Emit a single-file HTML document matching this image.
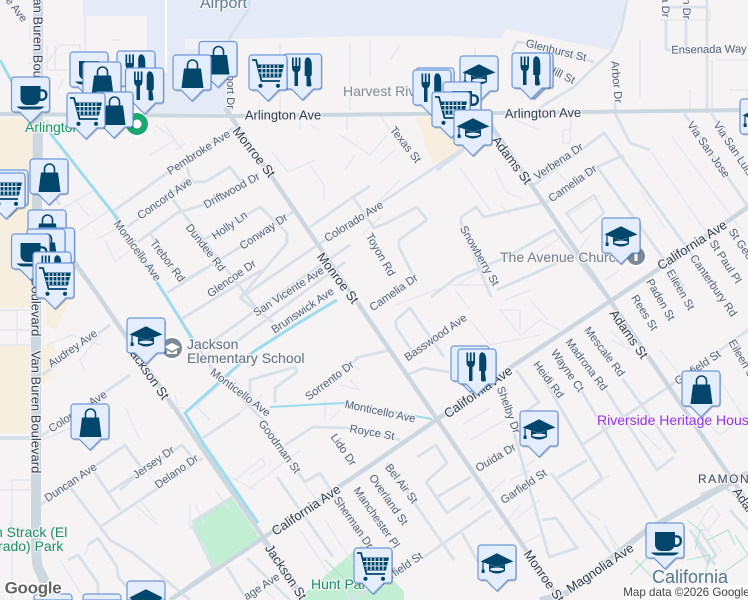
<!DOCTYPE html>
<html lang="en"><head><meta charset="utf-8"><title>Map</title>
<style>
html,body{margin:0;padding:0;width:748px;height:600px;overflow:hidden;background:#f5f3f4}
svg{display:block;font-family:"Liberation Sans",Arial,sans-serif;overflow:hidden}
.a{fill:none;stroke:#cdd7df;stroke-width:4.5;stroke-linejoin:round}
.b{fill:none;stroke:#d8e0e8;stroke-width:2.8;stroke-linejoin:round}
.c{fill:none;stroke:#e3e7ec;stroke-width:1.4;stroke-linejoin:round}
.w{fill:none;stroke:#9ddcee;stroke-width:3;stroke-linejoin:round}
text{text-anchor:middle;dominant-baseline:central;paint-order:stroke;stroke:#f5f3f4;stroke-width:2.5px;stroke-linejoin:round}
.s text,text.s{font-size:11.2px;fill:#4f6277}
.m text{font-size:13px;fill:#2f3f4f}
.p{text-anchor:start;font-size:14px;fill:#6c7a88;dominant-baseline:auto}
</style></head><body>
<svg width="748" height="600" viewBox="0 0 748 600" xmlns="http://www.w3.org/2000/svg">
<defs>
<path id="box" d="M3 0H35a3 3 0 0 1 3 3V32a3 3 0 0 1-3 3H30L19 46L8 35H3a3 3 0 0 1-3-3V3a3 3 0 0 1 3-3Z"/>
<g id="base">
<use href="#box" x="1" y="1.5" fill="#000" fill-opacity=".22"/>
<use href="#box" fill="#e3edfc" stroke="#6e97d8" stroke-width="1.2"/>
</g>
<g id="coffee"><use href="#base"/><g fill="#03466b">
<path d="M9 9H29V12.2H31A5 5 0 0 1 36 17V18A6 6 0 0 1 30 24H28A7 7 0 0 1 22 28H15A6.5 6.5 0 0 1 9 21.5ZM29 14.5V21.5H30A3 3 0 0 0 33.5 18V17A3 3 0 0 0 31 14.5Z" fill-rule="evenodd"/>
<path d="M5 29.5H33Q30 32.5 26 32.5H12Q8 32.5 5 29.5Z"/></g></g>
<g id="fork"><use href="#base"/><g fill="#03466b">
<path d="M8.5 3.500H10.200V12H11.800V3.500H13.600V12H15.200V3.500H17V13Q17 17 14.500 18V32H11V18Q8.500 17 8.500 13Z"/>
<path d="M24.500 3.200Q28.300 4 28.300 12V20Q28.300 22 26.800 22.500L28 31Q28 32.500 26 32.500H24.500Q23 32.500 23 31V22H21.200V8Q21.500 3.200 24.500 3.200Z"/></g></g>
<g id="bag"><use href="#base"/><g>
<path d="M11 13.500H28L30.500 33H8.500Z" fill="#03466b"/>
<path d="M14.500 16V10A5 5 0 0 1 24.500 10V16" fill="none" stroke="#03466b" stroke-width="1.600"/></g></g>
<g id="cart"><use href="#base"/><g>
<path d="M3 5H7L12.500 26H31" fill="none" stroke="#03466b" stroke-width="1.800"/>
<path d="M8.500 9.500H35L32 22.500H12Z" fill="#03466b"/>
<path d="M13 10V22M17 10V22M21 10V22M25 10V22M29 10V22M9 13.500H34.500M10 18H33.500" stroke="#e3edfc" stroke-width="1.100" fill="none"/>
<circle cx="11.500" cy="30.800" r="2.100" fill="#03466b"/><circle cx="29" cy="30.800" r="2.100" fill="#03466b"/></g></g>
<g id="grad"><use href="#base"/><g>
<path d="M19 8.300L35.500 16.500L19 22L2.500 16.500Z" fill="#03466b"/>
<path d="M11 19.500L19 22.300L27 19.500V26Q19 31 11 26Z" fill="#03466b"/>
<ellipse cx="19" cy="24.300" rx="7" ry="1.700" fill="#e3edfc"/>
<path d="M5 17V25" stroke="#03466b" stroke-width="1.200"/><rect x="3.600" y="24.500" width="3" height="3.500" fill="#03466b"/></g></g>
</defs>

<rect width="748" height="600" fill="#f5f3f4"/>
<!-- land use -->
<path d="M83 0V16H147V113H230V39L374 36H450L500 39L507 29L610 50L622 20L628 0Z" fill="#e4ebf7"/>
<rect x="185" y="39" width="45" height="10" fill="#f2f1f5"/>
<path d="M0 118H33V307H0Z" fill="#f6efdf"/>
<path d="M0 345H30V433H0Z" fill="#f6efdf"/>
<path d="M42 345H52Q60 350 52 375L42 385Z" fill="#f6efdf"/>
<path d="M45 295H72L56 330L46 325Z" fill="#f6efdf"/>
<path d="M416 117H460L464 147L442 165L432 163Z" fill="#f6efdf"/>
<path d="M192 522L232 497L260 538L213 568L208 553Z" fill="#c2eed3"/>
<path d="M297 600L347 557L362 545L404 592L404 600Z" fill="#c2eed3"/>

<rect x="165" y="0" width="2" height="73" fill="#fff"/>
<path class="b" d="M250 0L248 10L230 37V113" stroke-width="4"/>

<!-- thin lots -->
<g class="c">
<path d="M28 63H47L60 45H80V72M47 45V70H67M55 45V70M30 25V40M85 0V60M85 78V110M50 78V110M64 78L58 90"/>
<path d="M112 40H120M155 125L175 140L150 155M165 125L182 150M175 150L186 143M60 210L95 190M75 200L90 217M80 230L110 210M95 240L125 225M105 240L115 262L130 250"/>
<path d="M272 152L288 172L315 160M310 165L324 185V200M340 135L370 155L387 135M355 155L345 170M380 115L390 130M300 130V116M310 125L320 130M280 43V113M350 43V110M370 40V75M400 45L390 60M475 48V90M382 215L362 235M347 115V130"/>
<path d="M455 125L470 135M440 130L460 145M380 163L395 150M400 180L380 200M375 205L390 190M460 168L490 210M495 168L505 190M510 215L500 205M505 192L521 198M515 120L540 130M563 130H570V143H563ZM571 130V118"/>
<path d="M672 137L744 233M651 152L715 245M640 190L665 228M555 170L575 190M575 255L590 235M605 280L620 270M534 255L564 235M568 215L600 195M670 50H700M715 60H745M640 40V100M660 20H710V8M690 90V110M712 60V110M730 90H748V110M725 60H748"/>
<path d="M458 285L480 270M455 290L470 310M505 300L530 290M500 310L520 335M530 300L548 320M396 305L448 285L490 285"/>
<path d="M500 310H520L520 330M540 335L490 345L470 320M520 336L540 320L560 330M610 330L625 345M612 340L630 350L624 325"/>
<path d="M462 425L490 408M470 440L505 420M510 480L530 470M520 470L535 460M470 510L495 490M480 500L505 480M540 500L515 520M605 525L620 560M520 545L540 535M585 510L600 520"/>
<path d="M205 355L225 343M210 420L195 405M160 385L170 408H185M195 408L230 375L240 385M125 407L140 440M180 415L175 395M230 420L262 395M235 480L262 458L265 465L250 475M230 477L255 490M248 490L300 450M215 490L230 510M190 505V530M195 505L205 525M140 500L155 520M135 505L158 525M47 345L72 335L100 345M100 335L80 360L85 372"/>
<path d="M0 310H33M0 330H33M0 345H33M17 310V345M0 115H33M12 480V600M12 480H30M10 520V545M0 490H30M60 560L85 600M85 555L90 540M42 440L90 420M145 470L160 490"/>
<path d="M325 400V420M330 420L340 410M340 385L360 390L350 380M345 360L360 370M295 470L320 505M340 575L350 600M255 580L275 600M300 530L340 590M325 520L370 590M420 560L440 545M500 530L520 505M590 490L610 475"/>
<path d="M660 450L640 430M660 350L680 375M690 405L720 435L748 415M720 380L745 420M700 520L722 552M690 500L700 510M605 527L620 550M695 530L712 505L720 515L708 530Z"/>
</g>

<!-- minor -->
<g class="b">
<path d="M112 212L167 173L233 128"/>
<path d="M127 227L170 195L187 178M193 182H205L230 167L243 185M187 167L190 178L193 182"/>
<path d="M138 242L177 213L203 205L212 204M173 200L240 287M150 233L183 285"/>
<path d="M203 240L260 207L287 233V243L240 298M167 293L240 247L293 212M240 298L273 322"/>
<path d="M310 227L353 197L370 186M240 298L325 240M325 240L383 205"/>
<path d="M381 203L464 148M417 207L387 223L374 228L353 197M427 220L399 240V247L417 283M417 207L427 220"/>
<path d="M531 187L604 133L701 267M624 155L597 167L547 202L484 217L476 207L461 217V223L491 297M597 167L684 287"/>
<path d="M431 297L457 277L507 257L554 230L607 297M497 290L557 263"/>
<path d="M566 213L594 195L604 213L581 233Z" stroke-width="2"/>
<path d="M611 52L591 70L574 87L547 103L530 115M611 52L621 30L627 0M512 52L517 42L527 43L594 62M707 0V113M666 50H707M666 20V50M686 7V50M666 7H707M684 113L748 207M711 113L748 170M615 100V113L630 143L650 150"/>
<path d="M396 320L410 308L444 357M396 320V327L416 357M407 375L424 368L449 372M516 370L539 402L524 413M534 362L582 445L602 478L572 500"/>
<path d="M582 445L667 388L748 330M557 478L587 460M551 473L611 553M581 390L657 518M606 390L657 470L674 457M622 378L676 453M514 433L549 557L577 548L556 518L542 520"/>
<path d="M426 482L447 463L436 445L417 457M426 482L447 513L470 497M437 497L471 477M387 463L454 560M424 557L491 510M462 533L492 587"/>
<path d="M227 567L247 600M247 558L290 600M277 477L333 557M320 473L363 540M305 482L320 473M263 420L305 482M285 445L313 427L350 428L400 440"/>
<path d="M275 403V388L297 372L295 367L250 380V405M358 358L307 397M355 358L390 350"/>
<path d="M205 347L270 300L350 245M225 350L345 262M180 320L240 283L262 270M180 283L220 260M240 287L262 315M220 260L192 235"/>
<path d="M42 375L110 325M40 437L130 375M203 438L240 413M40 505L125 445L143 470L120 490M93 470L120 510M108 493L182 445L197 463M100 527L203 458M70 487L110 540L133 553L190 600"/>
<path d="M68 560L78 555L98 583V600M88 545L98 538L117 567L118 577L130 590M192 525L208 557L213 568M192 522L232 497M115 213L137 251L213 370L263 420"/>
<path d="M213 568L170 600M350 600L420 555M262 540L300 600M700 495L722 485L748 505M730 510L748 530M690 530L715 565M700 530L716 555L708 563L695 540"/>
<path d="M50 133L47 120M62 210L42 240M100 297L58 245M45 180L60 205"/>
<path d="M0 438H33" stroke-width="4"/>
</g>

<!-- canals -->
<g class="w">
<path d="M0 60L12 82M50 133L113 213L167 298L196 345"/>
<path d="M337 300L300 322L253 352L185 413L203 443L258 523"/>
<path d="M270 407L343 403L410 415L432 419" stroke-width="2"/>
</g>

<!-- major -->
<g class="a">
<path d="M0 114L230 116L500 113L748 110" stroke-width="4"/>
<path d="M225 108L560 600"/>
<path d="M490 124L748 503"/>
<path d="M66 250L100 298L167 397L263 537L303 597"/>
<path d="M170 600L263 538L374 463L436 420L514 365L609 302L657 270L748 207"/>
<path d="M540 600L567 593L647 530L748 473" stroke-width="6"/>
<path d="M38 0V120L36 300V535Q36 560 38 567L52 598" stroke-width="10"/>
</g>
<path d="M464 150L437 170" class="b"/>

<!-- green paths -->
<g fill="none" stroke="#a9e3cb" stroke-width="1">
<path d="M635 560L660 585M687 520L700 530L695 550M687 560L710 555L705 575M630 575L655 550M720 575L748 555L735 535M708 540L728 530L735 545M325 560L345 580"/>
</g>

<!-- street labels -->
<g class="s">
<text transform="translate(16 10) rotate(52)">e Ave</text>
<text transform="translate(230 85) rotate(90)">Airport Dr</text>
<text transform="translate(199 153) rotate(-33)">Pembroke Ave</text>
<text transform="translate(165 199) rotate(-35)">Concord Ave</text>
<text transform="translate(232 191) rotate(-29)">Driftwood Dr</text>
<text transform="translate(230 226) rotate(-35)">Holly Ln</text>
<text transform="translate(264 232) rotate(-34)">Conway Dr</text>
<text transform="translate(205 248) rotate(52)">Dundee Rd</text>
<text transform="translate(167 261) rotate(53)">Trebor Rd</text>
<text transform="translate(232 279) rotate(-35)">Glencoe Dr</text>
<text transform="translate(137 251) rotate(54)">Monticello Ave</text>
<text transform="translate(240 393) rotate(37)">Monticello Ave</text>
<text transform="translate(380 412) rotate(12)">Monticello Ave</text>
<text transform="translate(354 222) rotate(-32)">Colorado Ave</text>
<text transform="translate(289 292) rotate(-33)">San Vicente Ave</text>
<text transform="translate(303 311) rotate(-34)">Brunswick Ave</text>
<text transform="translate(380 255) rotate(60)">Toyon Rd</text>
<text transform="translate(394 293) rotate(-35)">Camelia Dr</text>
<text transform="translate(573 184) rotate(-35)">Camelia Dr</text>
<text transform="translate(559 162) rotate(-34)">Verbena Dr</text>
<text transform="translate(405 145) rotate(52)">Texas St</text>
<text transform="translate(479 256) rotate(60)">Snowberry St</text>
<text transform="translate(708 150) rotate(55)">Via San Jose</text>
<text transform="translate(733 149) rotate(56)">Via San Luis</text>
<text transform="translate(616 82) rotate(85)">Arbor Dr</text>
<text transform="translate(709 50) rotate(-1)">Ensenada Way</text>
<text transform="translate(556 51) rotate(14)">Glenhurst St</text>
<text transform="translate(561 75) rotate(26)">Hill St</text>
<text transform="translate(665 2) rotate(90)">Via Dr</text>
<text transform="translate(686 2) rotate(90)">Ann Dr</text>
<text transform="translate(745 251) rotate(56)">St George</text>
<text transform="translate(725 262) rotate(57)">St Paul Pl</text>
<text transform="translate(713 286) rotate(55)">Canterbury Rd</text>
<text transform="translate(680 290) rotate(60)">Eileen St</text>
<text transform="translate(660 300) rotate(60)">Paden St</text>
<text transform="translate(644 313) rotate(58)">Rees St</text>
<text transform="translate(604 352) rotate(53)">Mescale Rd</text>
<text transform="translate(586 365) rotate(53)">Madrona Rd</text>
<text transform="translate(567 371) rotate(55)">Wayne Ct</text>
<text transform="translate(548 380) rotate(53)">Heidi Rd</text>
<text transform="translate(508 410) rotate(70)">Shelby Dr</text>
<text transform="translate(436 338) rotate(-35)">Basswood Ave</text>
<text transform="translate(496 458) rotate(-31)">Ouida Dr</text>
<text transform="translate(524 487) rotate(-34)">Garfield St</text>
<text transform="translate(698 368) rotate(-34)">Garfield St</text>
<text transform="translate(400 570) rotate(-34)">Garfield St</text>
<text transform="translate(401 484) rotate(53)">Bel Air St</text>
<text transform="translate(388 500) rotate(55)">Overland St</text>
<text transform="translate(376 518) rotate(55)">Manchester Pl</text>
<text transform="translate(353 523) rotate(55)">Sherman Dr</text>
<text transform="translate(343 450) rotate(55)">Lido Dr</text>
<text transform="translate(372 433) rotate(10)">Royce St</text>
<text transform="translate(279 447) rotate(54)">Goodman St</text>
<text transform="translate(330 381) rotate(-37)">Sorrento Dr</text>
<text transform="translate(73 349) rotate(-35)">Audrey Ave</text>
<text transform="translate(78 412) rotate(-33)">Colorado Ave</text>
<text transform="translate(71 483) rotate(-34)">Duncan Ave</text>
<text transform="translate(154 463) rotate(-35)">Jersey Dr</text>
<text transform="translate(177 472) rotate(-35)">Delano Dr</text>
<text transform="translate(262 587) rotate(-33)">age Ave</text>
<text transform="translate(742 360) rotate(60)">Eileen St</text>
</g>
<g class="m">
<text x="283" y="115">Arlington Ave</text>
<text transform="translate(543 113) rotate(-1)">Arlington Ave</text>
<text transform="translate(254 152) rotate(52)">Monroe St</text>
<text transform="translate(338 278) rotate(53)">Monroe St</text>
<text transform="translate(544 576) rotate(55)">Monroe St</text>
<text transform="translate(512 160) rotate(53)">Adams St</text>
<text transform="translate(629 334) rotate(55)">Adams St</text>
<text transform="translate(752 512) rotate(55)">Adams St</text>
<text transform="translate(148 372) rotate(55)">Jackson St</text>
<text transform="translate(286 572) rotate(56)">Jackson St</text>
<text transform="translate(306 510) rotate(-34)">California Ave</text>
<text transform="translate(478 392) rotate(-35)">California Ave</text>
<text transform="translate(692 245) rotate(-33)">California Ave</text>
<text transform="translate(600 568) rotate(-34)">Magnolia Ave</text>
<text transform="translate(38 52) rotate(90)">Van Buren Boulevard</text>
<text transform="translate(36 275) rotate(90)">Van Buren Boulevard</text>
<text transform="translate(36 412) rotate(90)">Van Buren Boulevard</text>
<text x="698" y="479" style="font-size:12px;text-anchor:start;letter-spacing:1.500px;fill:#3a4856">RAMONA</text>
</g>

<!-- POI labels -->
<text class="p" x="200" y="8" style="font-size:16px;fill:#5f8191">Airport</text>
<text class="p" x="343" y="96" style="fill:#818c97">Harvest River</text>
<text class="p" x="25" y="132" style="fill:#159a68">Arlington</text>
<text class="p" x="500" y="262" style="fill:#737e88">The Avenue Church</text>
<text class="p" x="187" y="349" style="fill:#5f7082">Jackson</text>
<text class="p" x="187" y="363" style="fill:#5f7082">Elementary School</text>
<text class="p" x="597" y="425" style="fill:#9334e6">Riverside Heritage House</text>
<text class="p" x="-5" y="537" style="fill:#1c8f68">n Strack (El</text>
<text class="p" x="-2" y="551" style="fill:#1c8f68">rado) Park</text>
<text class="p" x="311" y="589" style="fill:#1c8f68">Hunt Park</text>
<text class="p" x="652" y="583" style="font-size:18px;fill:#557a90">California</text>

<!-- POI pins -->
<path d="M137 139L126 128A12 12 0 1 1 148 128Z" fill="#fff"/>
<circle cx="137" cy="124" r="11" fill="#1ca672"/><circle cx="137" cy="124" r="4.500" fill="#fff"/>
<circle cx="636" cy="256" r="11" fill="#fff"/><circle cx="636" cy="256" r="9" fill="#7c8a97"/><rect x="634.500" y="251" width="3" height="10" fill="#fff"/>
<circle cx="172" cy="348" r="12" fill="#fff"/><circle cx="172" cy="348" r="10" fill="#7c8a97"/>
<path d="M172 343L180 347L172 351L164 347Z" fill="#fff"/><path d="M167 350L172 353L177 350V354H167Z" fill="#fff"/>

<!-- markers -->
<use href="#coffee" x="70" y="52"/>
<use href="#fork" x="117" y="51"/>
<use href="#bag" x="83" y="62"/>
<use href="#fork" x="125.500" y="68"/>
<use href="#coffee" x="11.500" y="77"/>
<use href="#bag" x="95" y="92"/>
<use href="#cart" x="67" y="93"/>
<use href="#bag" x="199" y="41.500"/>
<use href="#bag" x="173" y="55"/>
<use href="#fork" x="283.500" y="54"/>
<use href="#cart" x="249" y="55"/>
<use href="#grad" x="460" y="56"/>
<use href="#fork" x="416" y="68"/>
<use href="#fork" x="413" y="70"/>
<use href="#coffee" x="443" y="82"/>
<use href="#cart" x="432" y="92"/>
<use href="#grad" x="454" y="110"/>
<use href="#fork" x="515" y="53"/>
<use href="#fork" x="512" y="53"/>
<use href="#grad" x="740" y="99"/>
<use href="#grad" x="602" y="218"/>
<use href="#cart" x="-10" y="170"/>
<use href="#cart" x="-13" y="173"/>
<use href="#bag" x="30" y="159"/>
<use href="#bag" x="28" y="210"/>
<use href="#fork" x="36.500" y="228"/>
<use href="#bag" x="27" y="229"/>
<use href="#coffee" x="11.500" y="234"/>
<use href="#fork" x="33" y="252"/>
<use href="#cart" x="36" y="263"/>
<use href="#grad" x="127" y="318"/>
<use href="#bag" x="71" y="404"/>
<use href="#fork" x="451" y="346"/>
<use href="#fork" x="458" y="349"/>
<use href="#grad" x="520" y="411"/>
<use href="#bag" x="682" y="371"/>
<use href="#grad" x="478" y="545"/>
<use href="#coffee" x="646" y="523"/>
<use href="#cart" x="354" y="548"/>

<!-- markers cut by the bottom edge -->
<path d="M130 581H162a3 3 0 0 1 3 3V600H127V584a3 3 0 0 1 3-3Z" fill="#e3edfc" stroke="#6e97d8" stroke-width="1.2"/>
<path d="M146 589.300L162.500 597.500L160 600H132L129.500 597.500Z" fill="#03466b"/>
<path d="M37 594H69a3 3 0 0 1 3 3V600H34V597a3 3 0 0 1 3-3Z" fill="#e3edfc" stroke="#6e97d8" stroke-width="1.2"/>
<path d="M86 594H118a3 3 0 0 1 3 3V600H83V597a3 3 0 0 1 3-3Z" fill="#e3edfc" stroke="#6e97d8" stroke-width="1.2"/>

<!-- attribution -->
<text x="33" y="588" style="font-size:17px;font-weight:bold;fill:#646464;stroke:#fff;stroke-width:3px;letter-spacing:-.3px">Google</text>
<rect x="625" y="585" width="123" height="15" fill="#fff" fill-opacity=".65"/>
<text x="686.500" y="592.500" style="font-size:11.600px;fill:#444;stroke:none">Map data ©2026 Google</text>
</svg>
</body></html>
